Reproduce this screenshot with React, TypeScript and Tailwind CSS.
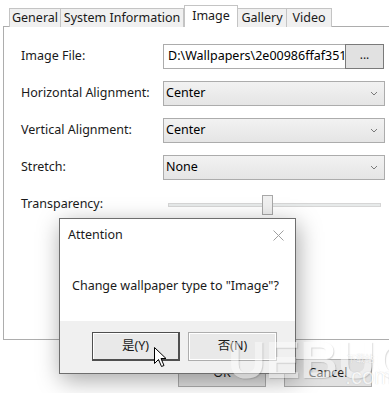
import React from "react";

const font = { fontFamily: '"Noto Sans", "Noto Sans CJK SC", sans-serif' };

function Chevron() {
  return (
    <svg width="8" height="5" viewBox="0 0 8 5" className="shrink-0">
      <path d="M1 1 L4 4 L7 1" fill="none" stroke="#7a7a7a" strokeWidth="1" />
    </svg>
  );
}

function Combo({ value }: { value: string }) {
  return (
    <div className="w-[222px] h-[25px] border border-[#acacac] bg-gradient-to-b from-[#f2f2f2] to-[#e5e5e5] flex items-center pl-[2px] pr-[6px] justify-between">
      <span className="text-[12.5px] text-black">{value}</span>
      <Chevron />
    </div>
  );
}

function Label({ children }: { children: React.ReactNode }) {
  return <div className="w-[142px] text-[12.5px] text-[#1a1a1a] shrink-0">{children}</div>;
}

export default function App() {
  return (
    <div className="relative w-[389px] h-[393px] bg-white overflow-hidden" style={font}>
      {/* Tabs */}
      <div className="flex items-end pl-[9px] pt-[5px] h-[27px] relative z-10">
        <div className="h-[19px] px-[3px] border border-b-0 border-[#c4c4c4] bg-[#f0f0f0] flex items-center text-[12.5px] text-[#1a1a1a] w-[52px] justify-center">General</div>
        <div className="h-[19px] border border-b-0 border-l-0 border-[#c4c4c4] bg-[#f0f0f0] flex items-center text-[12.5px] text-[#1a1a1a] w-[123px] justify-center">System Information</div>
        <div className="h-[22px] border border-b-0 border-[#c4c4c4] bg-white flex items-center text-[12.5px] text-[#1a1a1a] w-[54px] justify-center">Image</div>
        <div className="h-[19px] border border-b-0 border-l-0 border-[#c4c4c4] bg-[#f0f0f0] flex items-center text-[12.5px] text-[#1a1a1a] w-[49px] justify-center">Gallery</div>
        <div className="h-[19px] border border-b-0 border-l-0 border-[#c4c4c4] bg-[#f0f0f0] flex items-center text-[12.5px] text-[#1a1a1a] w-[45px] justify-center">Video</div>
      </div>
      {/* Panel */}
      <div className="ml-[3px] -mt-px w-[420px] h-[314px] border border-[#adadad] bg-white pl-[17px] pt-[17px] flex flex-col gap-[12px]">
        <div className="flex items-center h-[25px]">
          <Label>Image File:</Label>
          <div className="w-[183px] h-[25px] border border-[#acacac] bg-white flex items-center pl-[4px] overflow-hidden whitespace-nowrap text-[12.5px] text-black">
            D:\Wallpapers\2e00986ffaf351
          </div>
          <div className="w-[39px] h-[25px] -ml-px border border-[#7a7a7a] bg-[#e1e1e1] flex items-center justify-center text-[12px] text-[#1a1a1a] pb-[4px]">...</div>
        </div>
        <div className="flex items-center h-[25px]">
          <Label>Horizontal Alignment:</Label>
          <Combo value="Center" />
        </div>
        <div className="flex items-center h-[25px]">
          <Label>Vertical Alignment:</Label>
          <Combo value="Center" />
        </div>
        <div className="flex items-center h-[25px]">
          <Label>Stretch:</Label>
          <Combo value="None" />
        </div>
        <div className="flex items-center h-[25px]">
          <Label>Transparency:</Label>
          <div className="relative ml-[5px] w-[213px] h-[20px] flex items-center">
            <div className="w-full h-[4px] bg-[#e7eaea] border border-[#d6d6d6]" />
            <div className="absolute left-[94px] top-0 w-[11px] h-[20px] bg-[#f0f0f0] border border-[#a8a8a8]" />
          </div>
        </div>
      </div>
      {/* Bottom buttons */}
      <div className="flex gap-[18px] ml-[178px] mt-[19px]">
        <div className="w-[88px] h-[28px] border border-[#adadad] bg-[#e1e1e1] flex items-center justify-center text-[12.5px] text-[#1a1a1a]">OK</div>
        <div className="w-[88px] h-[28px] border border-[#adadad] bg-[#e1e1e1] flex items-center justify-center text-[12.5px] text-[#1a1a1a]">Cancel</div>
      </div>

      {/* Dialog */}
      <div className="absolute left-[59px] top-[218px] w-[237px] h-[156px] border border-[#6e6e6e] bg-white flex flex-col shadow-[2px_6px_22px_rgba(0,0,0,0.35)]">
        <div className="h-[32px] flex items-center justify-between pl-[8px] pr-[11px]">
          <span className="text-[12.5px] text-[#1a1a1a]">Attention</span>
          <svg width="11" height="11" viewBox="0 0 11 11">
            <path d="M0.5 0.5 L10.5 10.5 M10.5 0.5 L0.5 10.5" stroke="#a0a0a0" strokeWidth="1" />
          </svg>
        </div>
        <div className="flex-1 bg-white pl-[12px] pt-[26px] text-[12.5px] text-[#1a1a1a]">Change wallpaper type to "Image"?</div>
        <div className="h-[52px] bg-[#f0f0f0] flex items-start pt-[11px] pl-[32px] gap-[8px]">
          <div className="w-[88px] h-[29px] border border-[#4f4f4f] border-r-2 border-b-2 bg-[#e9e9e9] shadow-[inset_1px_1px_0_#ffffff] flex items-center justify-center text-[12.5px] text-[#1a1a1a]">是(Y)</div>
          <div className="w-[89px] h-[29px] border border-[#adadad] bg-[#e9e9e9] shadow-[inset_1px_1px_0_#ffffff,inset_-1px_-1px_0_#ffffff] flex items-center justify-center text-[12.5px] text-[#1a1a1a]">否(N)</div>
        </div>
      </div>

      {/* Watermark */}
      <div className="absolute left-[228px] top-[334px] flex items-end pointer-events-none select-none opacity-45">
        <span className="text-[52px] font-black leading-none text-white [text-shadow:1px_1px_1px_rgba(0,0,0,0.3)]" style={{ fontFamily: '"Liberation Sans", sans-serif' }}>UEBUG</span>
      </div>
      <div className="absolute left-[347px] top-[352px] text-[9px] text-white opacity-60 [text-shadow:0_0_1px_rgba(0,0,0,0.3)] pointer-events-none">下载站</div>
      <div className="absolute left-[345px] top-[366px] text-[22px] leading-none text-white opacity-60 [text-shadow:0_0_1px_rgba(0,0,0,0.3)] pointer-events-none" style={{ fontFamily: '"Liberation Sans", sans-serif' }}>.com</div>

      {/* Cursor */}
      <svg className="absolute left-[154px] top-[347px]" width="14" height="22" viewBox="0 0 14 22">
        <path d="M0.5 0.5 L0.5 16.5 L4.5 12.5 L7.5 19.5 L10 18.5 L7 11.5 L12 11.5 Z" fill="#ffffff" stroke="#000000" strokeWidth="1" strokeLinejoin="miter" />
      </svg>
    </div>
  );
}
